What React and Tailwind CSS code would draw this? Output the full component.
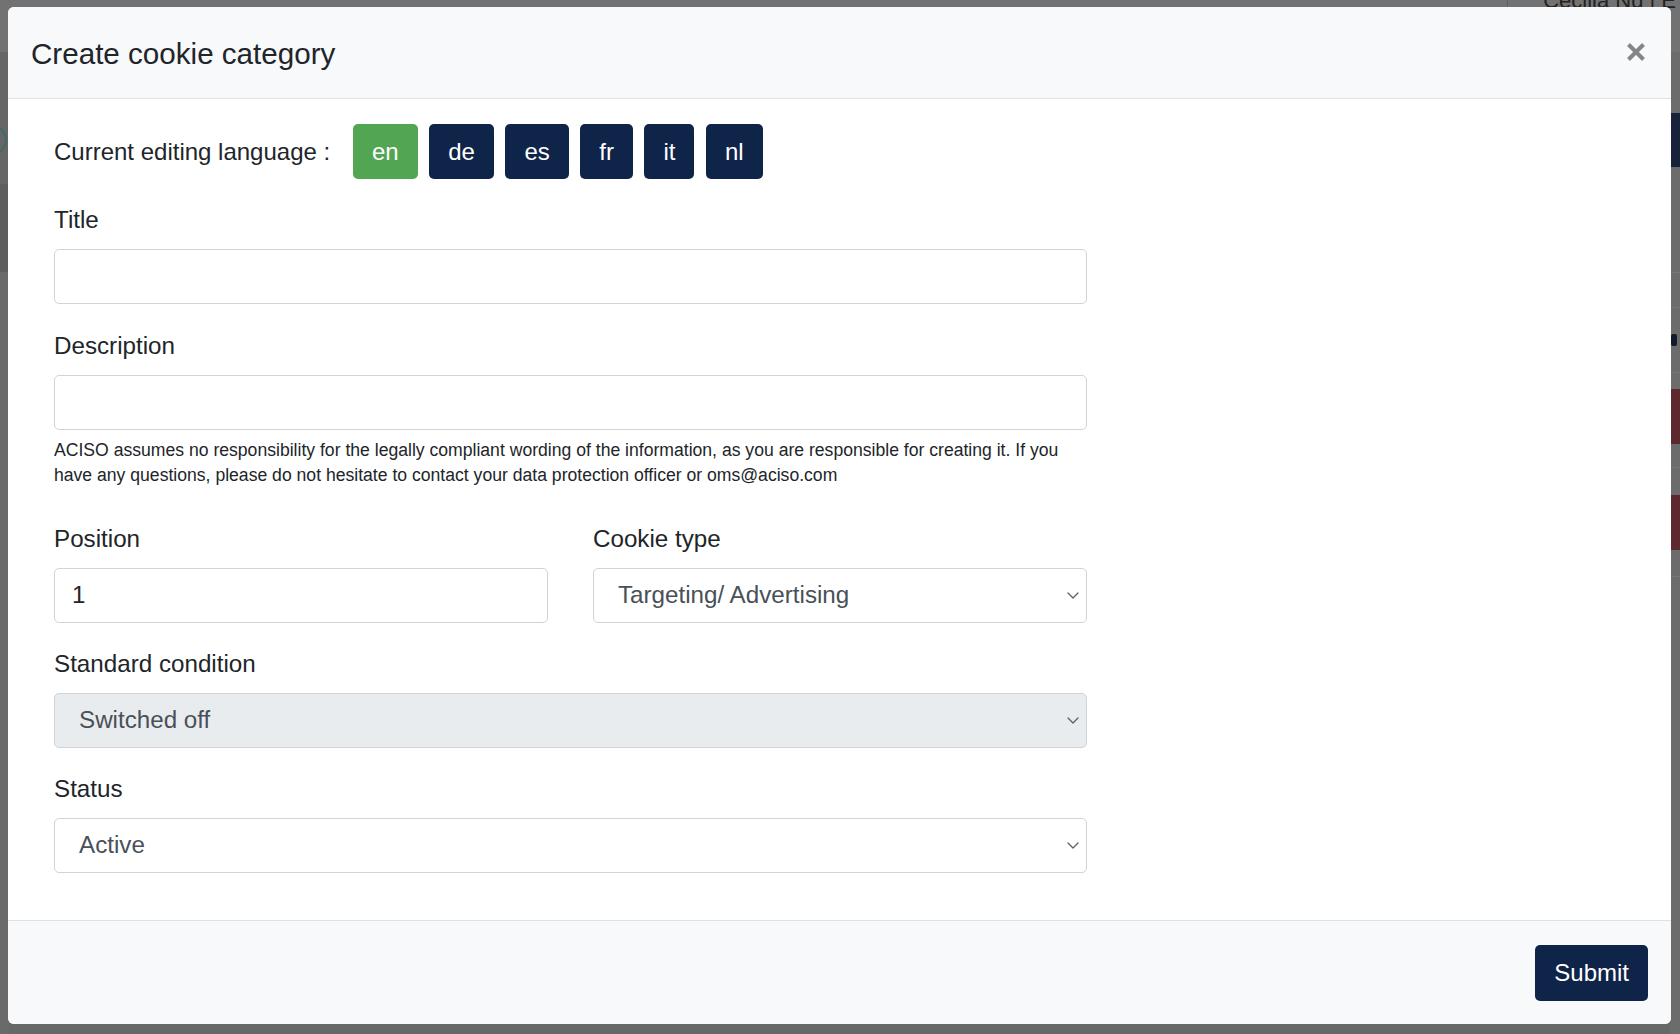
import React from 'react';

const languages = ['en', 'de', 'es', 'fr', 'it', 'nl'];

// small down chevron used by the selects
function Chevron() {
  return (
    <svg width="12" height="7" viewBox="0 0 12 7" fill="none" className="shrink-0">
      <path d="M1 1l5 5 5-5" stroke="#5b5f64" strokeWidth="1.3" strokeLinecap="round" strokeLinejoin="round" />
    </svg>
  );
}

function Label({ children }) {
  return <p className="text-[24.2px] leading-[34px] text-[#212529] mb-[12px]">{children}</p>;
}

function TextInput({ value }) {
  return (
    <div className="h-[55px] w-full rounded-[5px] border border-[#ced4da] bg-white flex items-center pl-[17px] text-[24.2px] text-[#212529]">
      {value}
    </div>
  );
}

function Select({ value, disabled }) {
  return (
    <div
      className={
        disabled
          ? 'h-[55px] w-full rounded-[5px] border border-[#ced4da] bg-[#e9ecef] flex items-center justify-between pl-[24px] pr-[7px] text-[24.2px] text-[#495057]'
          : 'h-[55px] w-full rounded-[5px] border border-[#ced4da] bg-white flex items-center justify-between pl-[24px] pr-[7px] text-[24.2px] text-[#495057]'
      }
    >
      <span>{value}</span>
      <Chevron />
    </div>
  );
}

export default function App() {
  return (
    <div className="relative w-full h-[1034px] overflow-hidden bg-[#686868] font-['Liberation_Sans',Arial,sans-serif]">
      {/* dimmed page behind the modal */}
      <div className="flex flex-col h-full">
        <div className="h-[52px] bg-[#727272] flex justify-end items-start">
          <div className="h-full w-px bg-[#5f5f5f] mr-[35px]" />
          <span className="text-[22px] leading-[22px] text-[#222] -mt-[10px] mr-[4px] whitespace-nowrap">Cécilia Ng | E</span>
        </div>
        <div className="flex flex-1">
          <div className="w-[9px] flex flex-col">
            <div className="h-[132px] bg-[#666] flex items-center">
              <div className="w-[30px] h-[30px] -ml-[23px] mt-[44px] rounded-full border-2 border-[#3e6b6a] shrink-0" />
            </div>
            <div className="h-[88px] bg-[#5e5e5e]" />
            <div className="flex-1 bg-[#6a6a6a]" />
          </div>
          <div className="flex-1" />
          <div className="w-[10px] flex flex-col bg-[#6c6c6c]">
            <div className="h-[61px]" />
            <div className="h-[54px] bg-[#18223a]" />
            <div className="h-[106px] border-b border-[#777]" />
            <div className="h-[35px] border-b border-[#777]" />
            <div className="h-[65px] border-b border-[#777] flex items-center">
              <div className="w-[6px] h-[12px] ml-[1px] rounded-[2px] bg-[#131a2b]" />
            </div>
            <div className="h-[16px]" />
            <div className="h-[55px] bg-[#5c2a2e]" />
            <div className="h-[24px] border-b border-[#777]" />
            <div className="h-[27px]" />
            <div className="h-[55px] bg-[#5c2a2e]" />
            <div className="h-[27px] border-b border-[#777]" />
          </div>
        </div>
      </div>

      {/* modal */}
      <div className="absolute left-[8px] top-[7px] w-[1663px] h-[1017px] bg-white rounded-[6px] overflow-hidden flex flex-col">
        <div className="h-[92px] shrink-0 bg-[#f8f9fa] border-b border-[#dee2e6] flex items-center justify-between pl-[23px] pr-[25px]">
          <h1 className="text-[29.6px] leading-none text-[#212529] pt-[2px]">Create cookie category</h1>
          <svg width="20" height="20" viewBox="0 0 20 20" className="mt-[-1px]">
            <path d="M2.5 2.5l15 15M17.5 2.5l-15 15" stroke="#858585" strokeWidth="4" />
          </svg>
        </div>

        <div className="pt-[25px] px-[46px] pb-[47px] w-[1125px]">
          <div className="flex items-center h-[55px]">
            <span className="w-[299px] shrink-0 text-[24px] text-[#212529]">Current editing language :</span>
            <div className="flex gap-[11.5px]">
              {languages.map(l => (
                <button
                  key={l}
                  className={
                    l === 'en'
                      ? 'h-[55px] px-[19px] rounded-[5px] bg-[#52a653] text-white text-[24px]'
                      : 'h-[55px] px-[19px] rounded-[5px] bg-[#0f2449] text-white text-[24px]'
                  }
                >
                  {l}
                </button>
              ))}
            </div>
          </div>

          <div className="w-[1033px]">
            <div className="mt-[24px]">
              <Label>Title</Label>
              <TextInput value="" />
            </div>

            <div className="mt-[25px]">
              <Label>Description</Label>
              <TextInput value="" />
              <p className="mt-[8px] text-[17.6px] leading-[24.5px] text-[#212529]">
                ACISO assumes no responsibility for the legally compliant wording of the information, as you are responsible for creating it. If you have any questions, please do not hesitate to contact your data protection officer or oms@aciso.com
              </p>
            </div>

            <div className="mt-[35px] grid grid-cols-2 gap-[45px]">
              <div>
                <Label>Position</Label>
                <TextInput value="1" />
              </div>
              <div>
                <Label>Cookie type</Label>
                <Select value="Targeting/ Advertising" />
              </div>
            </div>

            <div className="mt-[24px]">
              <Label>Standard condition</Label>
              <Select value="Switched off" disabled />
            </div>

            <div className="mt-[24px]">
              <Label>Status</Label>
              <Select value="Active" />
            </div>
          </div>
        </div>

        <div className="flex-1 bg-[#f8f9fa] border-t border-[#dee2e6] flex items-center justify-end pr-[23px]">
          <button className="h-[56px] px-[19px] rounded-[5px] bg-[#0f2449] text-white text-[24px]">Submit</button>
        </div>
      </div>
    </div>
  );
}
